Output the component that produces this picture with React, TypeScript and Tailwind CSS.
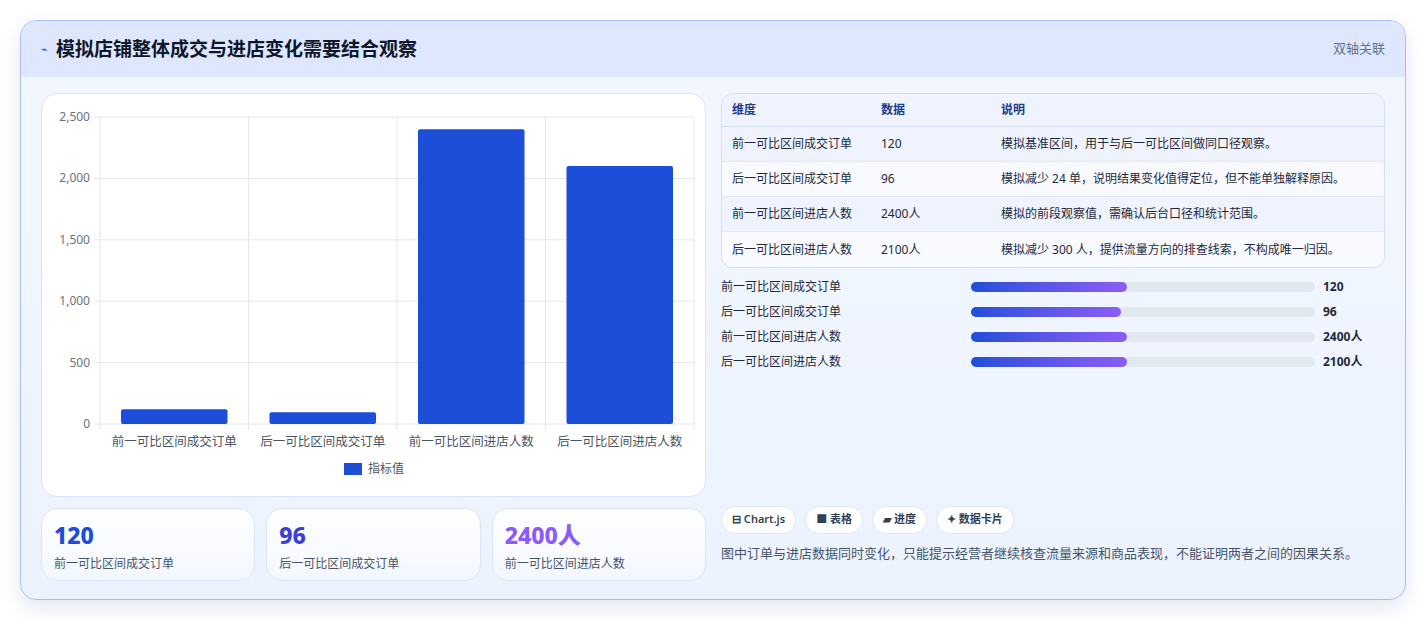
const FONT = { fontFamily: '"Noto Sans", "Noto Sans CJK SC", sans-serif' };

const ROWS = [
  { k: "前一可比区间成交订单", v: "120", n: 120, d: "模拟基准区间，用于与后一可比区间做同口径观察。" },
  { k: "后一可比区间成交订单", v: "96", n: 96, d: "模拟减少 24 单，说明结果变化值得定位，但不能单独解释原因。" },
  { k: "前一可比区间进店人数", v: "2400人", n: 2400, d: "模拟的前段观察值，需确认后台口径和统计范围。" },
  { k: "后一可比区间进店人数", v: "2100人", n: 2100, d: "模拟减少 300 人，提供流量方向的排查线索，不构成唯一归因。" },
];
const BARW = [156, 150, 156, 156];

function Chart() {
  // plot coords relative to card (card at 40,92)
  const left = 58, right = 652, top = 23, bottom = 330;
  const h = bottom - top;
  const ticks = [0, 500, 1000, 1500, 2000, 2500];
  const cw = (right - left) / 4;
  return (
    <svg width="665" height="404" viewBox="0 0 665 404" className="block">
      {ticks.map((t) => {
        const y = bottom - (t / 2500) * h;
        return (
          <g key={t}>
            <line x1={left - 6} x2={right} y1={y} y2={y} stroke="#e5e7eb" />
            <text x={left - 10} y={y + 4} textAnchor="end" fontSize="12" fill="#6b7280">
              {t.toLocaleString("en-US")}
            </text>
          </g>
        );
      })}
      {[0, 1, 2, 3, 4].map((i) => (
        <line key={i} x1={left + i * cw} x2={left + i * cw} y1={top} y2={bottom + 6} stroke="#e5e7eb" />
      ))}
      {ROWS.map((r, i) => {
        const bh = (r.n / 2500) * h;
        const x = left + i * cw + 21;
        return (
          <g key={r.k}>
            <rect x={x} y={bottom - bh} width={cw - 42} height={bh} rx="2" fill="#1d4ed8" />
            <text x={left + i * cw + cw / 2} y={352} textAnchor="middle" fontSize="12.5" fill="#4b5563">
              {r.k}
            </text>
          </g>
        );
      })}
      <rect x="302" y="369" width="18" height="12" fill="#1d4ed8" />
      <text x="326" y="379" fontSize="12" fill="#4b5563">指标值</text>
    </svg>
  );
}

export default function App() {
  return (
    <div style={FONT} className="h-[620px] w-[1426px] bg-white px-5 pt-5">
      <div className="h-[580px] overflow-hidden rounded-2xl border border-[#a9bdf0] bg-gradient-to-b from-[#f3f7ff] to-[#ecf3fe] shadow-[0_8px_20px_rgba(30,60,140,0.12)]">
        <div className="flex h-[56px] items-center justify-between bg-[#dee7fd] px-5">
          <div className="flex items-center gap-2">
            <span className="text-[11px] text-[#1d4ed8]">⌁</span>
            <h1 className="text-[19px] font-bold text-[#0f172a]">模拟店铺整体成交与进店变化需要结合观察</h1>
          </div>
          <span className="text-[13px] text-[#64748b]">双轴关联</span>
        </div>
        <div className="flex gap-[15px] px-5 pt-4">
          <div className="flex w-[665px] flex-col gap-[11px]">
            <div className="h-[404px] rounded-2xl border border-[#dbe4f5] bg-white">
              <Chart />
            </div>
            <div className="grid grid-cols-3 gap-[11px]">
              {[
                { v: "120", c: "text-[#1d4ed8]", k: ROWS[0].k },
                { v: "96", c: "text-[#3b3fd8]", k: ROWS[1].k },
                { v: "2400人", c: "text-[#8b5cf6]", k: ROWS[2].k },
              ].map((s) => (
                <div key={s.k} className="h-[73px] rounded-2xl border border-[#dbe4f5] bg-gradient-to-b from-white to-[#f3f7ff] px-3 pt-3">
                  <div className={`text-[23px] font-extrabold leading-7 ${s.c}`}>{s.v}</div>
                  <div className="mt-1.5 text-[12px] text-[#475569]">{s.k}</div>
                </div>
              ))}
            </div>
          </div>
          <div className="flex w-[666px] flex-col">
            <div className="overflow-hidden rounded-xl border border-[#d5def0] text-[12px] text-[#1e293b]">
              <div className="flex h-[33px] items-center border-b border-[#d5def0] bg-[#eef3fe] font-semibold text-[#1e3a8a]">
                <span className="w-[159px] pl-[10px]">维度</span>
                <span className="w-[120px]">数据</span>
                <span>说明</span>
              </div>
              {ROWS.map((r, i) => (
                <div key={r.k} className={`flex h-[35px] items-center ${i < 3 ? "border-b border-[#e5ebf6]" : ""} ${i % 2 ? "bg-[#f8faff]" : "bg-[#eef3fe]"}`}>
                  <span className="w-[159px] pl-[10px]">{r.k}</span>
                  <span className="w-[120px]">{r.v}</span>
                  <span>{r.d}</span>
                </div>
              ))}
            </div>
            <div className="mt-[10px] flex flex-col gap-[7px] text-[12px] text-[#1e293b]">
              {ROWS.map((r, i) => (
                <div key={r.k} className="flex h-[18px] items-center">
                  <span className="w-[250px]">{r.k}</span>
                  <div className="h-[10px] w-[344px] rounded-full bg-[#e2e8f0]">
                    <div className="h-full rounded-full bg-gradient-to-r from-[#1d4ed8] to-[#8b5cf6]" style={{ width: BARW[i] }} />
                  </div>
                  <span className="ml-2 font-bold">{r.v}</span>
                </div>
              ))}
            </div>
            <div className="mt-auto pb-[18px]">
              <div className="flex gap-[9px] text-[11px] font-semibold text-[#334155]">
                {["⊟ Chart.js", "■ 表格", "▰ 进度", "✦ 数据卡片"].map((t) => (
                  <span key={t} className="flex h-[28px] items-center rounded-full border border-[#e2e8f0] bg-white px-[10px]">{t}</span>
                ))}
              </div>
              <p className="mt-[10px] text-[13px] text-[#475569]">图中订单与进店数据同时变化，只能提示经营者继续核查流量来源和商品表现，不能证明两者之间的因果关系。</p>
            </div>
          </div>
        </div>
      </div>
    </div>
  );
}
